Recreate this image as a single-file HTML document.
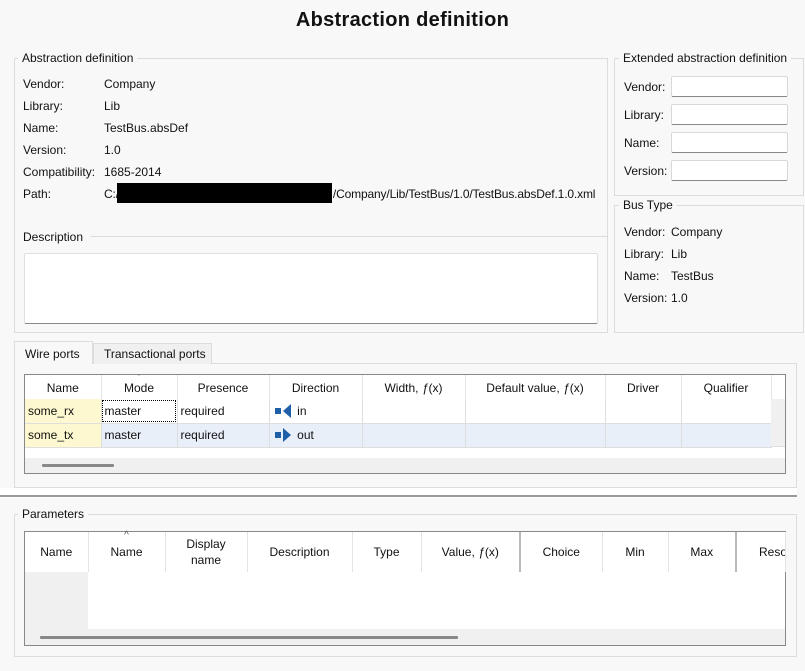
<!DOCTYPE html>
<html><head><meta charset="utf-8"><style>
*{box-sizing:border-box;margin:0;padding:0}
body{width:805px;height:671px;background:#f8f8f8;font-family:"Liberation Sans",sans-serif;font-size:12px;color:#111;position:relative;overflow:hidden}
.a{position:absolute;white-space:nowrap}
.gb{position:absolute;border:1px solid #dcdcdc}
.lbl{position:absolute;background:#f8f8f8;padding:0 4px;line-height:14px}
.inp{position:absolute;background:#fff;border:1px solid #d8d8d8;border-bottom-color:#888;border-radius:2px}
table{border-collapse:collapse;position:absolute;table-layout:fixed}
td{border-right:1px solid #dedede;border-bottom:1px solid #dedede;padding:0 3px;white-space:nowrap;overflow:hidden}
th{font-weight:normal;border-right:1px solid #e4e4e4;text-align:center;white-space:nowrap;overflow:visible;background:#fff}
.car{position:absolute;left:0;right:0;text-align:center;font-size:9px;color:#777;line-height:8px}
</style></head><body>
<div class="a" style="left:0;width:805px;top:9px;text-align:center;font-size:20px;font-weight:bold;letter-spacing:0.3px">Abstraction definition</div>

<div class="gb" style="left:14px;top:58px;width:594px;height:275px"></div>
<div class="lbl" style="left:18px;top:51px">Abstraction definition</div>
<div class="a" style="left:23px;top:77px">Vendor:</div><div class="a" style="left:104px;top:77px">Company</div>
<div class="a" style="left:23px;top:99px">Library:</div><div class="a" style="left:104px;top:99px">Lib</div>
<div class="a" style="left:23px;top:121px">Name:</div><div class="a" style="left:104px;top:121px">TestBus.absDef</div>
<div class="a" style="left:23px;top:143px">Version:</div><div class="a" style="left:104px;top:143px">1.0</div>
<div class="a" style="left:23px;top:165px">Compatibility:</div><div class="a" style="left:104px;top:165px">1685-2014</div>
<div class="a" style="left:23px;top:187px">Path:</div><div class="a" style="left:104px;top:187px;letter-spacing:-0.15px">C:/<span style="display:inline-block;width:214px"></span>/Company/Lib/TestBus/1.0/TestBus.absDef.1.0.xml</div>
<div class="a" style="left:117px;top:183px;width:215px;height:20px;background:#000"></div>
<div class="a" style="left:90px;top:236px;width:518px;height:1px;background:#dcdcdc"></div>
<div class="a" style="left:23px;top:230px">Description</div>
<div class="inp" style="left:24px;top:253px;width:574px;height:71px;border-color:#e0e0e0;border-bottom-color:#888"></div>

<div class="gb" style="left:614px;top:58px;width:190px;height:138px"></div>
<div class="lbl" style="left:619px;top:51px">Extended abstraction definition</div>
<div class="a" style="left:624px;top:80px">Vendor:</div><div class="inp" style="left:671px;top:76px;width:117px;height:21px"></div>
<div class="a" style="left:624px;top:108px">Library:</div><div class="inp" style="left:671px;top:104px;width:117px;height:21px"></div>
<div class="a" style="left:624px;top:136px">Name:</div><div class="inp" style="left:671px;top:132px;width:117px;height:21px"></div>
<div class="a" style="left:624px;top:164px">Version:</div><div class="inp" style="left:671px;top:160px;width:117px;height:21px"></div>

<div class="gb" style="left:614px;top:205px;width:190px;height:128px"></div>
<div class="lbl" style="left:619px;top:198px">Bus Type</div>
<div class="a" style="left:624px;top:225px">Vendor:</div><div class="a" style="left:671px;top:225px">Company</div>
<div class="a" style="left:624px;top:247px">Library:</div><div class="a" style="left:671px;top:247px">Lib</div>
<div class="a" style="left:624px;top:269px">Name:</div><div class="a" style="left:671px;top:269px">TestBus</div>
<div class="a" style="left:624px;top:291px">Version:</div><div class="a" style="left:671px;top:291px">1.0</div>

<div class="gb" style="left:14px;top:363px;width:783px;height:125px;background:#f8f8f8"></div>
<div class="a" style="left:93px;top:343px;width:119px;height:21px;background:#f0f0f0;border:1px solid #dcdcdc;border-bottom:none;padding:3px 0 0 10px">Transactional ports</div>
<div class="a" style="left:14px;top:341px;width:79px;height:23px;background:#f8f8f8;border:1px solid #dcdcdc;border-bottom:none;padding:5px 0 0 10px">Wire ports</div>

<div class="a" style="left:24px;top:374px;width:762px;height:100px;background:#fff;border:1px solid #888"></div>
<table style="left:25px;top:375px;width:746px">
<colgroup><col style="width:76px"><col style="width:76px"><col style="width:92px"><col style="width:93px"><col style="width:103px"><col style="width:140px"><col style="width:76px"><col style="width:90px"></colgroup>
<tr style="height:24px"><th style="vertical-align:top;padding-top:6px">Name</th><th style="vertical-align:top;padding-top:6px;position:relative"><span class="car" style="top:-1px">&#711;</span>Mode</th><th style="vertical-align:top;padding-top:6px">Presence</th><th style="vertical-align:top;padding-top:6px">Direction</th><th style="vertical-align:top;padding-top:6px">Width, <i>ƒ</i>(x)</th><th style="vertical-align:top;padding-top:6px">Default value, <i>ƒ</i>(x)</th><th style="vertical-align:top;padding-top:6px">Driver</th><th style="vertical-align:top;padding-top:6px">Qualifier</th></tr>
<tr style="height:24px"><td style="background:#fdf8d0">some_rx</td><td style="outline:1px dotted #000;outline-offset:-2px">master</td><td>required</td><td><span style="display:inline-block;width:6px;height:6px;background:#1e5fa8;margin:0 2px 1px 2px"></span><span style="display:inline-block;border-right:8px solid #1e5fa8;border-top:7px solid transparent;border-bottom:7px solid transparent;vertical-align:-3px"></span> &nbsp;in</td><td></td><td></td><td></td><td></td></tr>
<tr style="height:24px;background:#e8eff9"><td style="background:#fdf8d0">some_tx</td><td>master</td><td>required</td><td><span style="display:inline-block;width:6px;height:6px;background:#1e5fa8;margin:0 2px 1px 2px"></span><span style="display:inline-block;border-left:8px solid #1e5fa8;border-top:7px solid transparent;border-bottom:7px solid transparent;vertical-align:-3px"></span> &nbsp;out</td><td></td><td></td><td></td><td></td></tr>
</table>
<div class="a" style="left:771px;top:399px;width:14px;height:48px;background:#f0f0f0;border-bottom:1px solid #dedede"></div>
<div class="a" style="left:25px;top:458px;width:760px;height:15px;background:#f0f0f0"></div>
<div class="a" style="left:42px;top:464px;width:72px;height:3px;background:#888;border-radius:1px"></div>

<div class="a" style="left:0;top:488px;width:797px;height:10px;background:#fff"></div>
<div class="a" style="left:0;top:495px;width:797px;height:2px;background:#999"></div>

<div class="gb" style="left:14px;top:514px;width:783px;height:143px"></div>
<div class="lbl" style="left:18px;top:507px">Parameters</div>
<div class="a" style="left:24px;top:531px;width:762px;height:115px;background:#fff;border:1px solid #888"></div>
<table style="left:25px;top:532px;width:760px">
<colgroup><col style="width:63px"><col style="width:77px"><col style="width:82px"><col style="width:105px"><col style="width:69px"><col style="width:99px"><col style="width:82px"><col style="width:66px"><col style="width:68px"><col style="width:49px"></colgroup>
<tr style="height:40px"><th>Name</th><th style="position:relative"><span class="car" style="top:0px;font-size:10px;color:#555">^</span>Name</th><th style="line-height:16px">Display<br>name</th><th>Description</th><th>Type</th><th style="border-right:2px solid #bbb">Value, <i>ƒ</i>(x)</th><th>Choice</th><th>Min</th><th style="border-right:2px solid #bbb">Max</th><th style="text-align:left;padding-left:22px;overflow:hidden">Resol</th></tr>
</table>
<div class="a" style="left:25px;top:572px;width:63px;height:57px;background:#f0f0f0"></div>
<div class="a" style="left:25px;top:629px;width:760px;height:16px;background:#f0f0f0"></div>
<div class="a" style="left:40px;top:636px;width:418px;height:3px;background:#888;border-radius:1px"></div>
</body></html>
